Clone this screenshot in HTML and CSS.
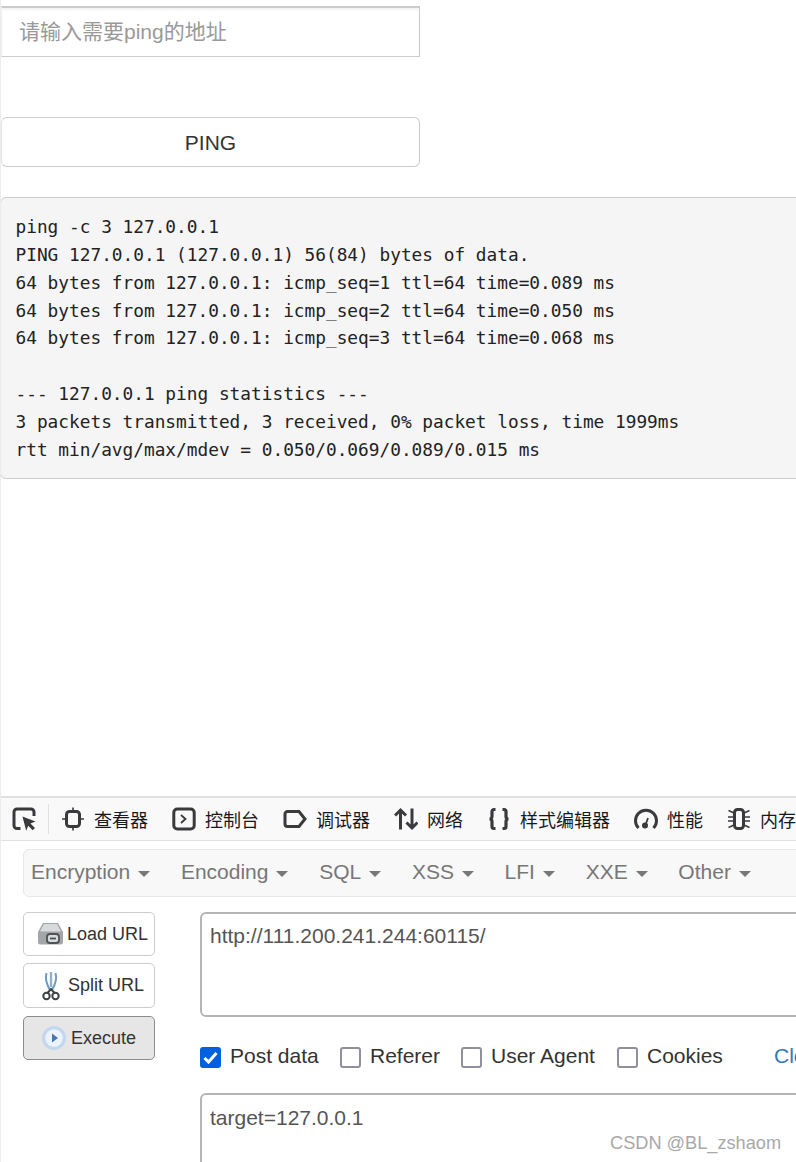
FILE: index.html
```html
<!DOCTYPE html>
<html lang="zh">
<head>
<meta charset="utf-8">
<title>Ping</title>
<link rel="stylesheet" href="styles.css">
</head>
<body>
<div class="page">
  <section class="app">
    <input class="ping-input" type="text" placeholder="请输入需要ping的地址">
    <button class="ping-btn" type="button">PING</button>
    <pre class="output">ping -c 3 127.0.0.1
PING 127.0.0.1 (127.0.0.1) 56(84) bytes of data.
64 bytes from 127.0.0.1: icmp_seq=1 ttl=64 time=0.089 ms
64 bytes from 127.0.0.1: icmp_seq=2 ttl=64 time=0.050 ms
64 bytes from 127.0.0.1: icmp_seq=3 ttl=64 time=0.068 ms

--- 127.0.0.1 ping statistics ---
3 packets transmitted, 3 received, 0% packet loss, time 1999ms
rtt min/avg/max/mdev = 0.050/0.069/0.089/0.015 ms</pre>
  </section>

  <section class="devtools">
    <div class="toolbar">
      <svg class="ticon" viewBox="0 0 24 24" fill="none" stroke="#3a3a3c" stroke-width="3"><path d="M8.500 21.500H5a3 3 0 0 1-3-3V5a3 3 0 0 1 3-3h14a3 3 0 0 1 3 3v4"/><path d="M10.500 9.500l13 5-5 2 4.500 4.500-2.300 2.300-4.500-4.500-2 5z" fill="#3a3a3c" stroke="none"/></svg>
      <span class="sep"></span>
      <div class="tabs">
        <div class="tab"><svg class="ticon" viewBox="0 0 24 24" fill="none" stroke="#3a3a3c" stroke-width="3"><rect x="5.500" y="4.500" width="13" height="15" rx="3"/><path d="M12 .5v4M12 19.500v4M1 12h4.500M18.500 12H23" stroke-width="1.600"/></svg>查看器</div>
        <div class="tab"><svg class="ticon" viewBox="0 0 24 24" fill="none" stroke="#3a3a3c"><rect x="1.800" y="2" width="20.400" height="20" rx="3.500" stroke-width="3"/><path d="M9 8l4.500 4-4.500 4" stroke-width="1.800"/></svg>控制台</div>
        <div class="tab"><svg class="ticon" viewBox="0 0 24 24" fill="none" stroke="#3a3a3c" stroke-width="3"><path d="M4.500 4.500h11.500l6 7.500-6 7.500H4.500a2.500 2.500 0 0 1-2.500-2.500V7a2.500 2.500 0 0 1 2.500-2.500z"/></svg>调试器</div>
        <div class="tab"><svg class="ticon" viewBox="0 0 24 24" fill="none" stroke="#3a3a3c" stroke-width="3"><path d="M6.500 22.500V3M1 8.500L6.500 3 12 8.500M18 1.500V21M12.500 15.500L18 21l5.500-5.500"/></svg>网络</div>
        <div class="tab"><svg class="ticon" viewBox="0 0 24 24" fill="none" stroke="#3a3a3c" stroke-width="3.200"><path d="M8.500 2.500H7A2 2 0 0 0 5 4.500v5a2.500 2.500 0 0 1-2.500 2.500A2.500 2.500 0 0 1 5 14.500v5a2 2 0 0 0 2 2h1.500M15.500 2.500H17a2 2 0 0 1 2 2v5a2.500 2.500 0 0 0 2.500 2.500 2.500 2.500 0 0 0-2.500 2.500v5a2 2 0 0 1-2 2h-1.500"/></svg>样式编辑器</div>
        <div class="tab"><svg class="ticon" viewBox="0 0 24 24" fill="none" stroke="#3a3a3c" stroke-width="3"><path d="M4.500 21A10.500 10.500 0 1 1 19.500 21"/><circle cx="11" cy="18.500" r="3" fill="#3a3a3c" stroke="none"/><path d="M11.500 18l2.500-7" stroke-width="1.800"/></svg>性能</div>
        <div class="tab"><svg class="ticon" viewBox="0 0 24 24" fill="none" stroke="#3a3a3c" stroke-width="1.500"><rect x="7.500" y="2.500" width="9" height="19" rx="3" stroke-width="3"/><path d="M7 6L1.500 3.500M7 10H1M7 14H1M7 18l-5.500 2.500M17 6l5.500-2.500M17 10h6M17 14h6M17 18l5.500 2.500"/></svg>内存</div>
      </div>
    </div>

    <div class="hackbar">
      <nav class="menu">
        <span class="menu-item">Encryption<i class="caret"></i></span>
        <span class="menu-item">Encoding<i class="caret"></i></span>
        <span class="menu-item">SQL<i class="caret"></i></span>
        <span class="menu-item">XSS<i class="caret"></i></span>
        <span class="menu-item">LFI<i class="caret"></i></span>
        <span class="menu-item">XXE<i class="caret"></i></span>
        <span class="menu-item">Other<i class="caret"></i></span>
      </nav>
      <div class="work">
        <div class="actions">
          <button class="act act-load" type="button"><svg class="aicon" viewBox="0 0 26 26"><path d="M5 2h15l5 9v10a2.500 2.500 0 0 1-2.500 2.500h-20A2.500 2.500 0 0 1 0 21V11z" fill="#a3a5a8"/><path d="M6 3h13l4 7.500H2z" fill="#d9dadc"/><rect x="9" y="13" width="12" height="9" rx="3" fill="#d9dadc" stroke="#4f5255" stroke-width="1.800"/><path d="M12 17.500h6" stroke="#4f5255" stroke-width="1.800"/></svg>Load URL</button>
          <button class="act act-split" type="button"><svg class="aicon" viewBox="0 0 18 30" fill="none"><path d="M4.500 2c-1.500 5 0 11 3.500 17h2c3.500-6 5-12 3.500-17" stroke="#6f9abd" stroke-width="2"/><path d="M9 1v15" stroke="#8fb1cc" stroke-width="2.400"/><circle cx="4.500" cy="25" r="3.200" stroke="#3e4245" stroke-width="2"/><circle cx="13.500" cy="25" r="3.200" stroke="#3e4245" stroke-width="2"/><path d="M5.500 22l3.500-4 3.500 4" stroke="#3e4245" stroke-width="2"/></svg>Split URL</button>
          <button class="act act-exec" type="button"><svg class="aicon" viewBox="0 0 24 24"><circle cx="12" cy="12" r="12" fill="#c3d8ee"/><circle cx="12" cy="12" r="8.800" fill="#edf3fa"/><path d="M10 7.500l6 4.500-6 4.500z" fill="#4677ae"/></svg>Execute</button>
        </div>
        <div class="fields">
          <textarea class="field field-url" spellcheck="false">http://111.200.241.244:60115/</textarea>
          <div class="opts">
            <label class="opt opt-post"><span class="box on"><svg viewBox="0 0 21 21"><path d="M4.500 11l4 4 8-9" fill="none" stroke="#fff" stroke-width="3"/></svg></span>Post data</label>
            <label class="opt opt-ref"><span class="box"></span>Referer</label>
            <label class="opt opt-ua"><span class="box"></span>User Agent</label>
            <label class="opt opt-ck"><span class="box"></span>Cookies</label>
            <a class="clear">Clear All</a>
          </div>
          <textarea class="field field-post" spellcheck="false">target=127.0.0.1</textarea>
        </div>
      </div>
    </div>
  </section>
  <div class="mark">CSDN @BL_zshaom</div>
</div>
</body>
</html>
```

FILE: styles.css
```css
* { box-sizing: border-box; }
html, body { margin: 0; padding: 0; background: #fff; }
body { width: 796px; height: 1162px; overflow: hidden; font-family: "Liberation Sans", Arial, "Noto Sans CJK SC", sans-serif; color: #333; }
.page { position: relative; width: 796px; height: 1162px; overflow: hidden; border-left: 1px solid #ececec; }
.app { padding-top: 6px; height: 796px; }
.ping-input { display: block; width: 419px; height: 51px; margin: 0; padding: 0 17px; border: 1px solid #ccc; border-left-color: #f2f2f2; border-top-width: 2px; border-radius: 0; outline: none; background: #fff; box-shadow: inset 0 2px 2px rgba(0,0,0,.05); font: 21px "Liberation Sans", "Noto Sans CJK SC", sans-serif; color: #333; }
.ping-input::placeholder { color: #999; opacity: 1; }
.ping-btn { display: block; width: 419px; height: 50px; margin: 60px 0 0; padding: 2px 0 0; border: 1px solid #ccc; border-left-color: #e4e4e4; border-radius: 6px; background: #fff; font: 21px "Liberation Sans", sans-serif; color: #333; }
.output { width: 820px; height: 282px; margin: 30px 0 0 -1px; padding: 15px 15px 15px 14.500px; border: 1px solid #ccc; border-radius: 6px; background: #f5f5f5; font: 17.800px/27.860px "DejaVu Sans Mono", monospace; color: #222; overflow: hidden; white-space: pre; }

.devtools { width: 795px; }
.toolbar { display: flex; align-items: center; height: 45px; padding-left: 11px; border-top: 2px solid #e0e0e2; border-bottom: 1px solid #e0e0e2; background: #f9f9fa; white-space: nowrap; }
.ticon { flex: none; width: 24px; height: 24px; }
.sep { flex: none; width: 1px; height: 30px; margin: 0 12px 0 12px; background: #e0e0e2; }
.tabs { display: flex; align-items: center; gap: 24px; }
.tab { display: flex; align-items: center; gap: 9px; font: 18px "Noto Sans CJK SC", sans-serif; color: #18181a; }

.hackbar { padding: 8px 0 0 22px; }
.menu { display: flex; gap: 30.700px; width: 800px; height: 48px; padding: 0 7px 2px; align-items: center; border: 1px solid #e7e7e7; border-radius: 6px; background: #f8f8f8; font-size: 21px; color: #777; white-space: nowrap; }
.menu-item { display: inline-flex; align-items: center; }
.caret { width: 0; height: 0; margin-left: 8px; margin-top: 4px; border-top: 6px solid #777; border-left: 6.500px solid transparent; border-right: 6.500px solid transparent; }

.work { display: flex; gap: 45px; margin-top: 15px; }
.actions { flex: none; display: flex; flex-direction: column; width: 132px; }
.act { display: flex; align-items: center; justify-content: flex-start; width: 132px; border: 1px solid #ccc; border-radius: 5px; background: #fff; font: 18px "Liberation Sans", sans-serif; color: #333; white-space: nowrap; }
.act-load { height: 44px; gap: 3px; padding: 0 0 0 14px; }
.act-split { height: 45px; margin-top: 7px; gap: 8px; padding: 0 0 0 18px; }
.act-exec { height: 44px; margin-top: 8px; gap: 5px; padding: 0 0 0 18px; border-color: #8c8c8c; background: #e6e6e6; }
.aicon { flex: none; width: 26px; height: 26px; }
.act-split .aicon { width: 18px; height: 30px; }
.act-exec .aicon { width: 24px; height: 24px; }
.fields { flex: none; width: 640px; }
.field { display: block; width: 640px; margin: 0; padding: 9px 8px; border: 2px solid #b5b5b5; border-radius: 6px; outline: none; resize: none; background: #fff; font: 21px/26px "Liberation Sans", sans-serif; color: #555; overflow: hidden; }
.field-url { height: 105px; }
.field-post { height: 100px; margin-top: 26px; padding-top: 10px; }
.opts { display: flex; align-items: center; height: 22px; margin-top: 28px; font-size: 21px; color: #333; white-space: nowrap; }
.opt { flex: none; display: flex; align-items: center; gap: 9px; }
.opt-post { width: 140px; }
.opt-ref { width: 121px; }
.opt-ua { width: 156px; }
.opt-ck { width: 157px; }
.box { flex: none; display: block; width: 21px; height: 21px; margin-top: 2px; border: 2.500px solid #8f8f9d; border-radius: 3px; background: #fff; }
.box.on { border: 0; background: #0060df; }
.box svg { display: block; width: 21px; height: 21px; }
.clear { flex: none; color: #337ab7; }
.mark { position: absolute; left: 609px; top: 1132px; font: 18.200px/22px "Liberation Sans", sans-serif; color: #a8a8a8; white-space: nowrap; }
```
